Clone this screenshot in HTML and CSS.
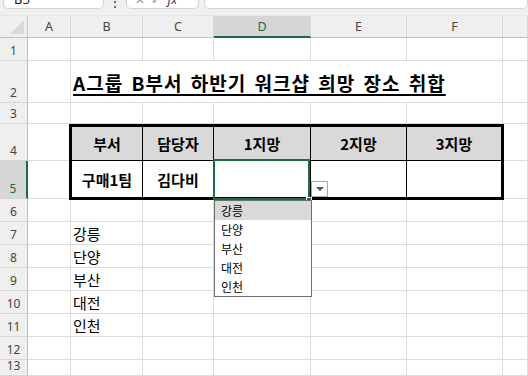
FILE: index.html
```html
<!DOCTYPE html>
<html lang="ko">
<head>
<meta charset="utf-8">
<title>워크샵 희망 장소</title>
<link rel="stylesheet" href="styles.css">
</head>
<body>
<div class="app">
  <div class="bar">
    <div class="box namebox"><span class="cut">B5</span></div>
    <div class="sep"><span class="cut">⋮</span></div>
    <div class="box fxbox"><span class="cut">✕ &nbsp;✓ &nbsp;<i>fx</i></span></div>
    <div class="box formula"></div>
  </div>
  <div class="sheet">
    <div class="corner"><span class="tri"></span></div>
    <div class="ch">A</div><div class="ch">B</div><div class="ch">C</div><div class="ch ch-sel">D</div><div class="ch">E</div><div class="ch">F</div><div class="ch"></div>

    <div class="rh">1</div><div class="c"></div><div class="c"></div><div class="c"></div><div class="c"></div><div class="c"></div><div class="c"></div><div class="c"></div>

    <div class="rh">2</div><div class="c"></div><div class="c title"><span>A그룹 B부서 하반기 워크샵 희망 장소 취합</span></div><div class="c"></div>

    <div class="rh">3</div><div class="c"></div><div class="c"></div><div class="c"></div><div class="c"></div><div class="c"></div><div class="c"></div><div class="c"></div>

    <div class="rh">4</div><div class="c"></div>
    <div class="tbl">
      <div class="th">부서</div><div class="th">담당자</div><div class="th">1지망</div><div class="th">2지망</div><div class="th">3지망</div>
      <div class="td">구매1팀</div><div class="td">김다비</div>
      <div class="td td-sel">
        <span class="selbox"><span class="handle"></span></span>
        <span class="ddbtn"><span class="arrow"></span></span>
        <ul class="ddlist">
          <li class="hl">강릉</li><li>단양</li><li>부산</li><li>대전</li><li>인천</li>
        </ul>
      </div>
      <div class="td"></div><div class="td"></div>
    </div>
    <div class="c"></div>

    <div class="rh rh-sel">5</div><div class="c"></div><div class="c"></div>

    <div class="rh">6</div><div class="c"></div><div class="c"></div><div class="c"></div><div class="c"></div><div class="c"></div><div class="c"></div><div class="c"></div>
    <div class="rh">7</div><div class="c"></div><div class="c txt">강릉</div><div class="c"></div><div class="c"></div><div class="c"></div><div class="c"></div><div class="c"></div>
    <div class="rh">8</div><div class="c"></div><div class="c txt">단양</div><div class="c"></div><div class="c"></div><div class="c"></div><div class="c"></div><div class="c"></div>
    <div class="rh">9</div><div class="c"></div><div class="c txt">부산</div><div class="c"></div><div class="c"></div><div class="c"></div><div class="c"></div><div class="c"></div>
    <div class="rh">10</div><div class="c"></div><div class="c txt">대전</div><div class="c"></div><div class="c"></div><div class="c"></div><div class="c"></div><div class="c"></div>
    <div class="rh">11</div><div class="c"></div><div class="c txt">인천</div><div class="c"></div><div class="c"></div><div class="c"></div><div class="c"></div><div class="c"></div>
    <div class="rh">12</div><div class="c"></div><div class="c"></div><div class="c"></div><div class="c"></div><div class="c"></div><div class="c"></div><div class="c"></div>
    <div class="rh">13</div><div class="c"></div><div class="c"></div><div class="c"></div><div class="c"></div><div class="c"></div><div class="c"></div><div class="c"></div>
  </div>
</div>
</body>
</html>
```
FILE: styles.css
```css
* { box-sizing: border-box; }
html, body { margin: 0; padding: 0; }
body {
  width: 528px;
  height: 376px;
  overflow: hidden;
  background: #fff;
  font-family: "Noto Sans CJK KR", "Noto Sans", sans-serif;
  color: #000;
}
.app { width: 528px; height: 376px; overflow: hidden; }

/* formula bar strip */
.bar {
  height: 16px;
  background: #f0f0f0;
  display: flex;
  align-items: flex-start;
  padding-left: 3px;
  border-bottom: 1px solid #e4e4e4;
}
.box {
  height: 9px;
  background: #fff;
  border: 1px solid #d2d2d2;
  border-top: none;
  border-radius: 0 0 5px 5px;
  overflow: hidden;
}
.namebox { width: 101px; }
.sep { width: 22px; height: 9px; overflow: hidden; text-align: center; }
.fxbox { width: 73px; padding-left: 8px; color: #9a9a9a; }
.formula { flex: 1; margin-left: 5px; }
.cut {
  display: block;
  font-family: "Noto Sans", sans-serif;
  font-size: 13px;
  line-height: 13px;
  margin-top: -7px;
  padding-left: 10px;
  color: #222;
  white-space: nowrap;
}
.sep .cut { padding-left: 0; font-size: 12px; margin-top: -5px; }
.fxbox .cut { padding-left: 0; color: #999; font-size: 12px; }
.fxbox i { color: #333; }

/* sheet grid */
.sheet {
  display: grid;
  grid-template-columns: 28px 43px 72px 71px 97px 96px 96px 25px;
  grid-template-rows: 22px 23px 42px 21px 37px 38px 23px 23px 23px 23px 23px 23px 23px 16px;
}
.corner {
  background: #efefef;
  border-right: 1px solid #c8c8c8;
  border-bottom: 1px solid #c0c0c0;
  position: relative;
}
.tri {
  position: absolute;
  right: 3px;
  bottom: 3px;
  width: 0; height: 0;
  border-left: 14px solid transparent;
  border-bottom: 14px solid #d9d9d9;
}
.ch {
  background: #efefef;
  border-right: 1px solid #d6d6d6;
  border-bottom: 1px solid #c0c0c0;
  font-family: "Noto Sans", sans-serif;
  font-size: 12.5px;
  color: #444;
  display: flex;
  align-items: center;
  justify-content: center;
}
.ch-sel {
  background: #d6d6d6;
  color: #1e6b41;
  border-bottom: 2px solid #1e6b41;
}
.rh {
  background: #efefef;
  border-right: 1px solid #c0c0c0;
  border-bottom: 1px solid #d6d6d6;
  font-family: "Noto Sans", sans-serif;
  font-size: 12px;
  color: #444;
  display: flex;
  align-items: flex-end;
  justify-content: center;
  padding-bottom: 2px;
  line-height: 14px;
}
.rh-sel {
  background: #d6d6d6;
  color: #1e6b41;
  border-right: 2px solid #1e6b41;
}
.c {
  border-right: 1px solid #dcdcdc;
  border-bottom: 1px solid #dcdcdc;
}
.txt {
  font-size: 15px;
  line-height: 20px;
  padding-left: 2px;
  display: flex;
  align-items: flex-end;
}
.title {
  grid-column: span 5;
  display: flex;
  align-items: center;
  padding-left: 2px;
  padding-top: 1px;
  font-weight: bold;
  font-size: 19px;
  white-space: nowrap;
}
.title span {
  text-decoration: underline;
  text-decoration-thickness: 2px;
  text-underline-offset: 3px;
  word-spacing: 2px;
  letter-spacing: 1px;
}

/* data table */
.tbl {
  grid-column: 3 / 8;
  grid-row: span 2;
  margin: 0 -1px -1px -2px;
  border: 3px solid #000;
  display: grid;
  grid-template-columns: 71px 71px 97px 96px 94px;
  grid-template-rows: 34px 36px;
  background: #fff;
  position: relative;
  z-index: 2;
}
.th, .td {
  border-right: 1px solid #000;
  display: flex;
  align-items: center;
  justify-content: center;
  font-weight: bold;
  font-size: 15px;
  line-height: 20px;
}
.th {
  background: #d9d9d9;
  border-bottom: 1px solid #000;
  padding-top: 1px;
}
.td { padding-top: 2px; }
.th:nth-child(5), .td:last-child { border-right: none; }

.td-sel { position: relative; }
.selbox {
  position: absolute;
  left: -1px;
  top: -2px;
  right: 0;
  bottom: -3px;
  border: 2px solid #1e6b41;
  z-index: 3;
}
.handle {
  position: absolute;
  right: -4px;
  bottom: -4px;
  width: 6px;
  height: 5px;
  background: #1e6b41;
  border: 1px solid #fff;
}
.ddbtn {
  position: absolute;
  left: 97px;
  top: 20px;
  width: 17px;
  height: 16px;
  background: #fff;
  border: 1px solid #a6a6a6;
  z-index: 4;
  display: flex;
  align-items: center;
  justify-content: center;
}
.arrow {
  width: 0; height: 0;
  border-left: 4px solid transparent;
  border-right: 4px solid transparent;
  border-top: 4px solid #555;
}
.ddlist {
  position: absolute;
  left: 0;
  top: 39px;
  width: 98px;
  height: 97px;
  margin: 0;
  padding: 0;
  list-style: none;
  background: #fff;
  border: 1px solid #6e6e6e;
  z-index: 5;
  font-weight: normal;
  font-size: 12px;
}
.ddlist li {
  height: 19px;
  line-height: 19px;
  padding-left: 6px;
  text-align: left;
}
.ddlist li.hl { background: #d9d9d9; }
```
